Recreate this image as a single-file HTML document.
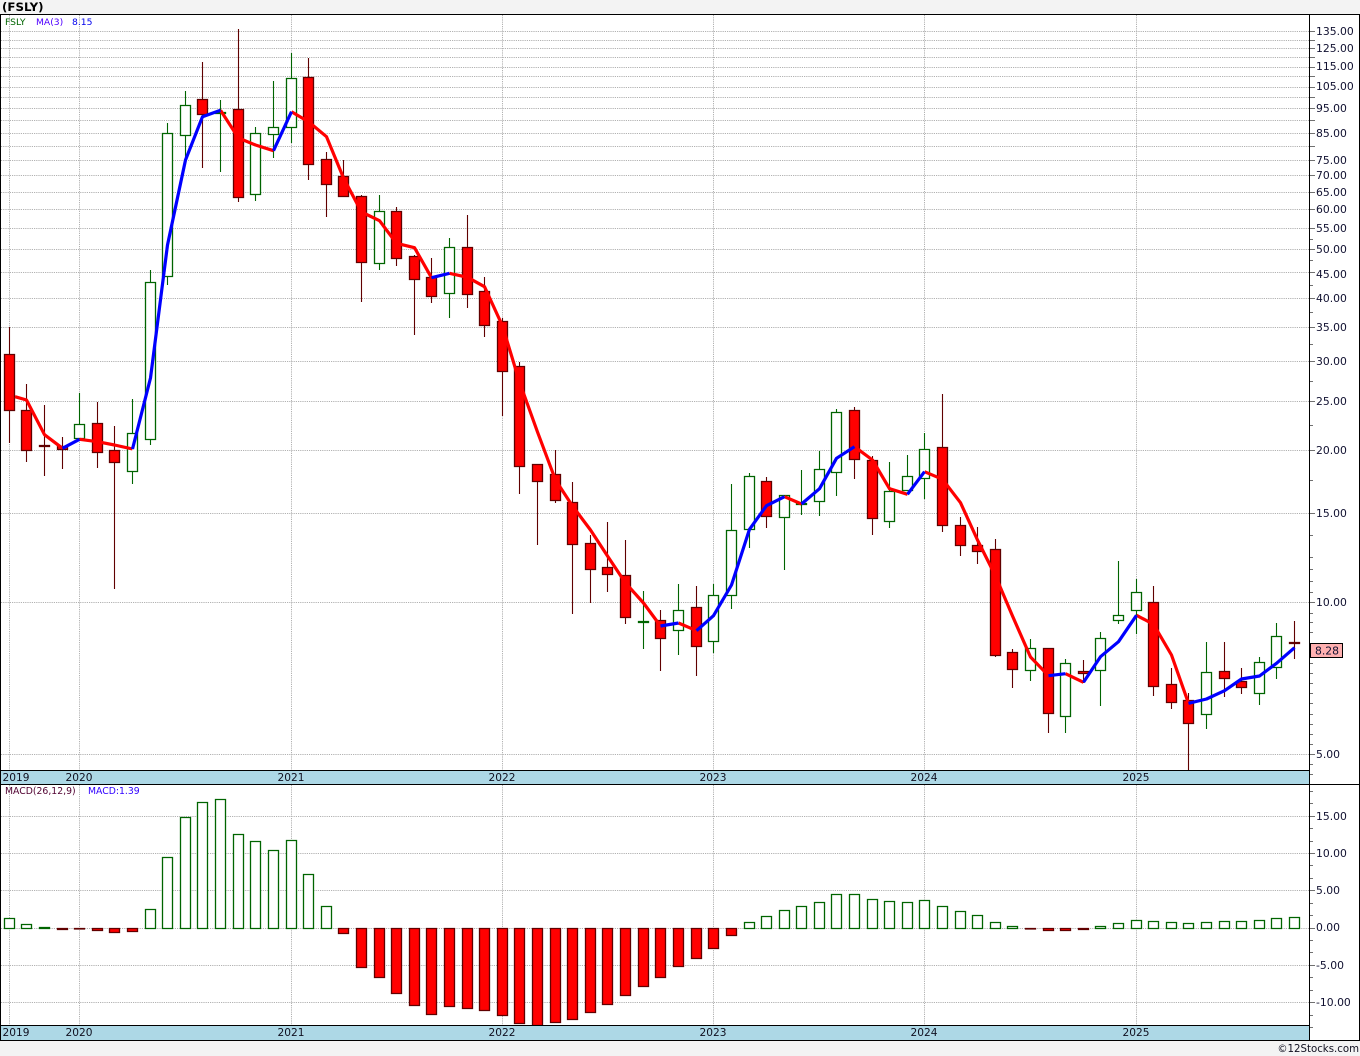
<!DOCTYPE html>
<html lang="en">
<head>
<meta charset="utf-8">
<title>(FSLY)</title>
<style>
html,body{margin:0;padding:0;background:#f3f3f3;width:1360px;height:1056px;overflow:hidden}
svg{display:block}
text{font-family:"DejaVu Sans","Liberation Sans",sans-serif}
.ax{font-size:10.8px;fill:#101030}
.yr{font-size:10.6px;fill:#101020;text-anchor:middle}
</style>
</head>
<body>
<svg xmlns="http://www.w3.org/2000/svg" width="1360" height="1056" viewBox="0 0 1360 1056">
<rect width="1360" height="1056" fill="#f3f3f3"/>
<rect x="0" y="14" width="1360" height="1027" fill="#fff"/>
<!-- grid -->
<path fill="none" stroke="#b2b2b2" stroke-width="1" stroke-dasharray="1.2 1" d="M1 31.5H1309M1 40.5H1309M1 48.5H1309M1 57.5H1309M1 67.5H1309M1 76.5H1309M1 87.5H1309M1 97.5H1309M1 108.5H1309M1 120.5H1309M1 133.5H1309M1 146.5H1309M1 160.5H1309M1 175.5H1309M1 192.5H1309M1 209.5H1309M1 228.5H1309M1 249.5H1309M1 272.5H1309M1 298.5H1309M1 327.5H1309M1 361.5H1309M1 401.5H1309M1 450.5H1309M1 513.5H1309M1 602.5H1309M1 754.5H1309M1 816.5H1309M1 853.5H1309M1 890.5H1309M1 928.5H1309M1 965.5H1309M1 1002.5H1309M9.5 15V770M79.5 15V770M291.5 15V770M502.5 15V770M713.5 15V770M924.5 15V770M1136.5 15V770M9.5 785V1025M79.5 785V1025M291.5 785V1025M502.5 785V1025M713.5 785V1025M924.5 785V1025M1136.5 785V1025"/>
<!-- wicks -->
<path fill="none" stroke="#006400" stroke-width="1.1" d="M79.5 393V439M132.5 399V484M150.5 270V445M167.5 123V285M185.5 91V160M220.5 100V172M255.5 127V201M273.5 81V158M291.5 53V143M379.5 195V270M449.5 238V318M643.5 591V649M678.5 584V655M713.5 584V653M731.5 484V609M749.5 473V548M784.5 495V570M801.5 470V515M819.5 451V516M836.5 409V496M889.5 462V528M907.5 455V491M924.5 433V499M1030.5 639V681M1065.5 659V733M1100.5 632V706M1118.5 561V624M1136.5 579V634M1206.5 642V729M1259.5 657V705M1276.5 623V679"/>
<path fill="none" stroke="#600000" stroke-width="1.1" d="M9.5 327V443M26.5 384V462M44.5 405V476M62.5 437V469M97.5 402V468M114.5 426V589M202.5 62V168M238.5 29V202M308.5 58V180M326.5 152V217M343.5 160V196M361.5 195V302M396.5 207V266M414.5 255V335M431.5 258V303M467.5 215V308M484.5 277V337M502.5 318V416M519.5 362V494M537.5 464V545M555.5 450V503M572.5 482V614M590.5 535V603M607.5 522V592M625.5 540V624M660.5 610V671M696.5 586V676M766.5 477V528M854.5 407V479M872.5 456V535M942.5 394V532M960.5 517V556M977.5 527V564M995.5 539V657M1012.5 649V688M1048.5 648V733M1083.5 660V683M1153.5 586V696M1171.5 668V709M1188.5 693V770M1224.5 642V697M1241.5 668V694M1294.5 621V659"/>
<!-- green bodies -->
<path fill="#fff" stroke="#006400" stroke-width="1.3" d="M74.5 424.5h10v14h-10zM127.5 433.5h10v38h-10zM145.5 282.5h10v157h-10zM162.5 133.5h10v143h-10zM180.5 105.5h10v30h-10zM215.5 112.5h10v1h-10zM250.5 133.5h10v61h-10zM268.5 127.5h10v7h-10zM286.5 78.5h10v49h-10zM374.5 211.5h10v52h-10zM444.5 247.5h10v46h-10zM638.5 621.5h10v1h-10zM673.5 610.5h10v20h-10zM708.5 595.5h10v46h-10zM726.5 530.5h10v65h-10zM744.5 476.5h10v53h-10zM779.5 495.5h10v22h-10zM796.5 503.5h10v1h-10zM814.5 469.5h10v32h-10zM831.5 412.5h10v60h-10zM884.5 491.5h10v30h-10zM902.5 476.5h10v14h-10zM919.5 449.5h10v29h-10zM1025.5 648.5h10v22h-10zM1060.5 663.5h10v53h-10zM1095.5 638.5h10v32h-10zM1113.5 615.5h10v5h-10zM1131.5 592.5h10v18h-10zM1201.5 672.5h10v42h-10zM1254.5 662.5h10v31h-10zM1271.5 636.5h10v31h-10z"/>
<!-- red bodies -->
<path fill="#ff0000" stroke="#600000" stroke-width="1.3" d="M4.5 354.5h10v56h-10zM21.5 410.5h10v40h-10zM39.5 445.5h10v1h-10zM57.5 446.5h10v3h-10zM92.5 423.5h10v29h-10zM109.5 450.5h10v12h-10zM197.5 99.5h10v15h-10zM233.5 109.5h10v88h-10zM303.5 77.5h10v87h-10zM321.5 159.5h10v25h-10zM338.5 176.5h10v20h-10zM356.5 196.5h10v66h-10zM391.5 211.5h10v47h-10zM409.5 256.5h10v23h-10zM426.5 277.5h10v19h-10zM462.5 247.5h10v47h-10zM479.5 291.5h10v34h-10zM497.5 321.5h10v50h-10zM514.5 366.5h10v100h-10zM532.5 464.5h10v17h-10zM550.5 474.5h10v26h-10zM567.5 502.5h10v42h-10zM585.5 543.5h10v26h-10zM602.5 567.5h10v7h-10zM620.5 575.5h10v42h-10zM655.5 620.5h10v18h-10zM691.5 607.5h10v39h-10zM761.5 481.5h10v35h-10zM849.5 410.5h10v49h-10zM867.5 460.5h10v58h-10zM937.5 447.5h10v78h-10zM955.5 525.5h10v20h-10zM972.5 545.5h10v6h-10zM990.5 549.5h10v106h-10zM1007.5 652.5h10v17h-10zM1043.5 648.5h10v65h-10zM1078.5 671.5h10v2h-10zM1148.5 602.5h10v84h-10zM1166.5 684.5h10v18h-10zM1183.5 700.5h10v23h-10zM1219.5 671.5h10v7h-10zM1236.5 681.5h10v6h-10zM1289.5 642.5h10v1h-10z"/>
<!-- MACD green -->
<path fill="#fff" stroke="#006400" stroke-width="1.3" d="M4.5 918.5h10v10h-10zM21.5 924.5h10v4h-10zM39.5 927.5h10v1h-10zM145.5 909.5h10v19h-10zM162.5 857.5h10v71h-10zM180.5 817.5h10v111h-10zM197.5 802.5h10v126h-10zM215.5 799.5h10v129h-10zM233.5 834.5h10v94h-10zM250.5 841.5h10v87h-10zM268.5 850.5h10v78h-10zM286.5 840.5h10v88h-10zM303.5 874.5h10v54h-10zM321.5 906.5h10v22h-10zM744.5 922.5h10v6h-10zM761.5 916.5h10v12h-10zM779.5 910.5h10v18h-10zM796.5 906.5h10v22h-10zM814.5 902.5h10v26h-10zM831.5 894.5h10v34h-10zM849.5 894.5h10v34h-10zM867.5 899.5h10v29h-10zM884.5 901.5h10v27h-10zM902.5 902.5h10v26h-10zM919.5 900.5h10v28h-10zM937.5 906.5h10v22h-10zM955.5 911.5h10v17h-10zM972.5 915.5h10v13h-10zM990.5 922.5h10v6h-10zM1007.5 926.5h10v2h-10zM1095.5 926.5h10v2h-10zM1113.5 923.5h10v5h-10zM1131.5 920.5h10v8h-10zM1148.5 921.5h10v7h-10zM1166.5 922.5h10v6h-10zM1183.5 923.5h10v5h-10zM1201.5 922.5h10v6h-10zM1219.5 921.5h10v7h-10zM1236.5 921.5h10v7h-10zM1254.5 920.5h10v8h-10zM1271.5 918.5h10v10h-10zM1289.5 917.5h10v11h-10z"/>
<!-- MACD red -->
<path fill="#ff0000" stroke="#600000" stroke-width="1.3" d="M57.5 928.5h10v1h-10zM74.5 928.5h10v.5h-10zM92.5 928.5h10v2h-10zM109.5 928.5h10v4h-10zM127.5 928.5h10v3h-10zM338.5 928.5h10v5h-10zM356.5 928.5h10v39h-10zM374.5 928.5h10v49h-10zM391.5 928.5h10v65h-10zM409.5 928.5h10v77h-10zM426.5 928.5h10v86h-10zM444.5 928.5h10v78h-10zM462.5 928.5h10v80h-10zM479.5 928.5h10v82h-10zM497.5 928.5h10v87h-10zM514.5 928.5h10v95h-10zM532.5 928.5h10v97h-10zM550.5 928.5h10v94h-10zM567.5 928.5h10v91h-10zM585.5 928.5h10v84h-10zM602.5 928.5h10v76h-10zM620.5 928.5h10v67h-10zM638.5 928.5h10v58h-10zM655.5 928.5h10v49h-10zM673.5 928.5h10v38h-10zM691.5 928.5h10v30h-10zM708.5 928.5h10v20h-10zM726.5 928.5h10v7h-10zM1025.5 928.5h10v.5h-10zM1043.5 928.5h10v2h-10zM1060.5 928.5h10v2h-10zM1078.5 928.5h10v1h-10z"/>
<g shape-rendering="crispEdges">
<!-- year bars -->
<rect x="0" y="770" width="1309" height="14" fill="#add8e6"/>
<rect x="0" y="1025" width="1309" height="15" fill="#add8e6"/>
<!-- axis ticks -->
<path fill="none" stroke="#707070" d="M1310 31.5h5M1310 40.5h5M1310 48.5h5M1310 57.5h5M1310 67.5h5M1310 76.5h5M1310 87.5h5M1310 97.5h5M1310 108.5h5M1310 120.5h5M1310 133.5h5M1310 146.5h5M1310 160.5h5M1310 175.5h5M1310 192.5h5M1310 209.5h5M1310 228.5h5M1310 249.5h5M1310 272.5h5M1310 298.5h5M1310 327.5h5M1310 361.5h5M1310 401.5h5M1310 450.5h5M1310 513.5h5M1310 602.5h5M1310 754.5h5M1310 816.5h5M1310 853.5h5M1310 890.5h5M1310 928.5h5M1310 965.5h5M1310 1002.5h5M1310 239.5h3M1310 260.5h3M1310 285.5h3M1310 312.5h3M1310 344.5h3M1310 381.5h3M1310 425.5h3M1310 480.5h3M1310 535.5h3M1310 557.5h3M1310 569.5h3M1310 581.5h3M1310 592.5h3M1310 613.5h3M1310 622.5h3M1310 632.5h3M1310 663.5h3M1310 673.5h3M1310 683.5h3M1310 693.5h3M1310 703.5h3M1310 714.5h3M1310 724.5h3M1310 734.5h3M1310 744.5h3M1310 764.5h3M1310 774.5h3M1310 791.5h3M1310 803.5h3M1310 828.5h3M1310 841.5h3M1310 865.5h3M1310 878.5h3M1310 903.5h3M1310 915.5h3M1310 940.5h3M1310 952.5h3M1310 977.5h3M1310 990.5h3M1310 1015.5h3M1310 1027.5h3"/>
<!-- frame -->
<path fill="none" stroke="#000" d="M0 14.5H1360M0.5 14V1041M1309.5 14V1041M1359.5 14V1041M0 770.5H1310M0 784.5H1360M0 1025.5H1310M0 1040.5H1360"/>
</g>
<!-- moving average -->
<g fill="none" stroke-width="3.2" stroke-linejoin="round" stroke-linecap="butt">
<g stroke="#ff0000">
<polyline points="15,396.7 26.5,400 44.5,434.7 62.5,448.3"/>
<polyline points="79.5,439.3 97.5,441.7 114.5,445 132.5,449"/>
<polyline points="220.5,110.3 238.5,138 255.5,145 273.5,150.7"/>
<polyline points="291.5,111.7 308.5,121.7 326.5,136.7 343.5,178 361.5,212 379.5,220.7 396.5,243.3 414.5,247.7 431.5,277.7"/>
<polyline points="449.5,273.3 467.5,277.3 484.5,286.7 502.5,326 519.5,382 537.5,432 555.5,480 572.5,506 590.5,530 607.5,556 625.5,583 643.5,603 660.5,626"/>
<polyline points="678.5,623 696.5,630.7"/>
<polyline points="784.5,496.7 801.5,504"/>
<polyline points="854.5,446.7 872.5,460 889.5,488.7 907.5,494.3"/>
<polyline points="924.5,471.7 942.5,479.3 960.5,502.7 977.5,540 995.5,576 1012.5,616 1030.5,657 1048.5,675.7"/>
<polyline points="1065.5,673.7 1083.5,682.3"/>
<polyline points="1136.5,615.3 1153.5,624.3 1171.5,655 1188.5,703.3"/>
</g>
<g stroke="#0000ff">
<polyline points="62.5,448.3 79.5,439.3"/>
<polyline points="132.5,449 150.5,378 167.5,245 185.5,160 202.5,116.7 220.5,110.3"/>
<polyline points="273.5,150.7 291.5,111.7"/>
<polyline points="431.5,277.7 449.5,273.3"/>
<polyline points="660.5,626 678.5,623"/>
<polyline points="696.5,630.7 713.5,615.7 731.5,585 749.5,529.3 766.5,505.7 784.5,496.7"/>
<polyline points="801.5,504 819.5,488.7 836.5,458.3 854.5,446.7"/>
<polyline points="907.5,494.3 924.5,471.7"/>
<polyline points="1048.5,675.7 1065.5,673.7"/>
<polyline points="1083.5,682.3 1100.5,656.7 1118.5,641.7 1136.5,615.3"/>
<polyline points="1188.5,703.3 1206.5,699 1224.5,690.7 1241.5,679 1259.5,676 1276.5,663.3 1294.5,647.7"/>
</g>
</g>
<!-- price tag -->
<rect x="1310.5" y="643.5" width="32" height="14" fill="#ffb0b0" stroke="#000" shape-rendering="crispEdges"/>
<text class="ax" x="1315" y="654.5">8.28</text>
<!-- title & legends -->
<text x="2" y="11" font-size="11.8" font-weight="700" fill="#000">(FSLY)</text>
<text x="5" y="25" font-size="9.2" fill="#006400">FSLY</text>
<text x="36" y="25" font-size="9.2" fill="#5000ff">MA(3)</text>
<text x="72" y="25" font-size="9.2" fill="#0000ee">8.15</text>
<text x="5" y="794" font-size="9.3" fill="#500030">MACD(26,12,9)</text>
<text x="88" y="794" font-size="9.3" fill="#3000ff">MACD:1.39</text>
<!-- price axis labels -->
<text class="ax" x="1316" y="35">135.00</text>
<text class="ax" x="1316" y="52">125.00</text>
<text class="ax" x="1316" y="70">115.00</text>
<text class="ax" x="1316" y="90">105.00</text>
<text class="ax" x="1316" y="112">95.00</text>
<text class="ax" x="1316" y="137">85.00</text>
<text class="ax" x="1316" y="164">75.00</text>
<text class="ax" x="1316" y="179">70.00</text>
<text class="ax" x="1316" y="196">65.00</text>
<text class="ax" x="1316" y="213">60.00</text>
<text class="ax" x="1316" y="232">55.00</text>
<text class="ax" x="1316" y="253">50.00</text>
<text class="ax" x="1316" y="278">45.00</text>
<text class="ax" x="1316" y="302">40.00</text>
<text class="ax" x="1316" y="331">35.00</text>
<text class="ax" x="1316" y="365">30.00</text>
<text class="ax" x="1316" y="405">25.00</text>
<text class="ax" x="1316" y="454">20.00</text>
<text class="ax" x="1316" y="517">15.00</text>
<text class="ax" x="1316" y="606">10.00</text>
<text class="ax" x="1316" y="758">5.00</text>
<text class="ax" x="1316" y="820">15.00</text>
<text class="ax" x="1316" y="857">10.00</text>
<text class="ax" x="1316" y="894">5.00</text>
<text class="ax" x="1316" y="931">0.00</text>
<text class="ax" x="1316" y="969">-5.00</text>
<text class="ax" x="1316" y="1006">-10.00</text>
<!-- years -->
<text class="yr" x="16" y="781">2019</text>
<text class="yr" x="79" y="781">2020</text>
<text class="yr" x="291" y="781">2021</text>
<text class="yr" x="502" y="781">2022</text>
<text class="yr" x="713" y="781">2023</text>
<text class="yr" x="924" y="781">2024</text>
<text class="yr" x="1136" y="781">2025</text>
<text class="yr" x="16" y="1036">2019</text>
<text class="yr" x="79" y="1036">2020</text>
<text class="yr" x="291" y="1036">2021</text>
<text class="yr" x="502" y="1036">2022</text>
<text class="yr" x="713" y="1036">2023</text>
<text class="yr" x="924" y="1036">2024</text>
<text class="yr" x="1136" y="1036">2025</text>
<text x="1359" y="1052" font-size="10.2" fill="#101020" text-anchor="end">©12Stocks.com</text>
</svg>
</body>
</html>
